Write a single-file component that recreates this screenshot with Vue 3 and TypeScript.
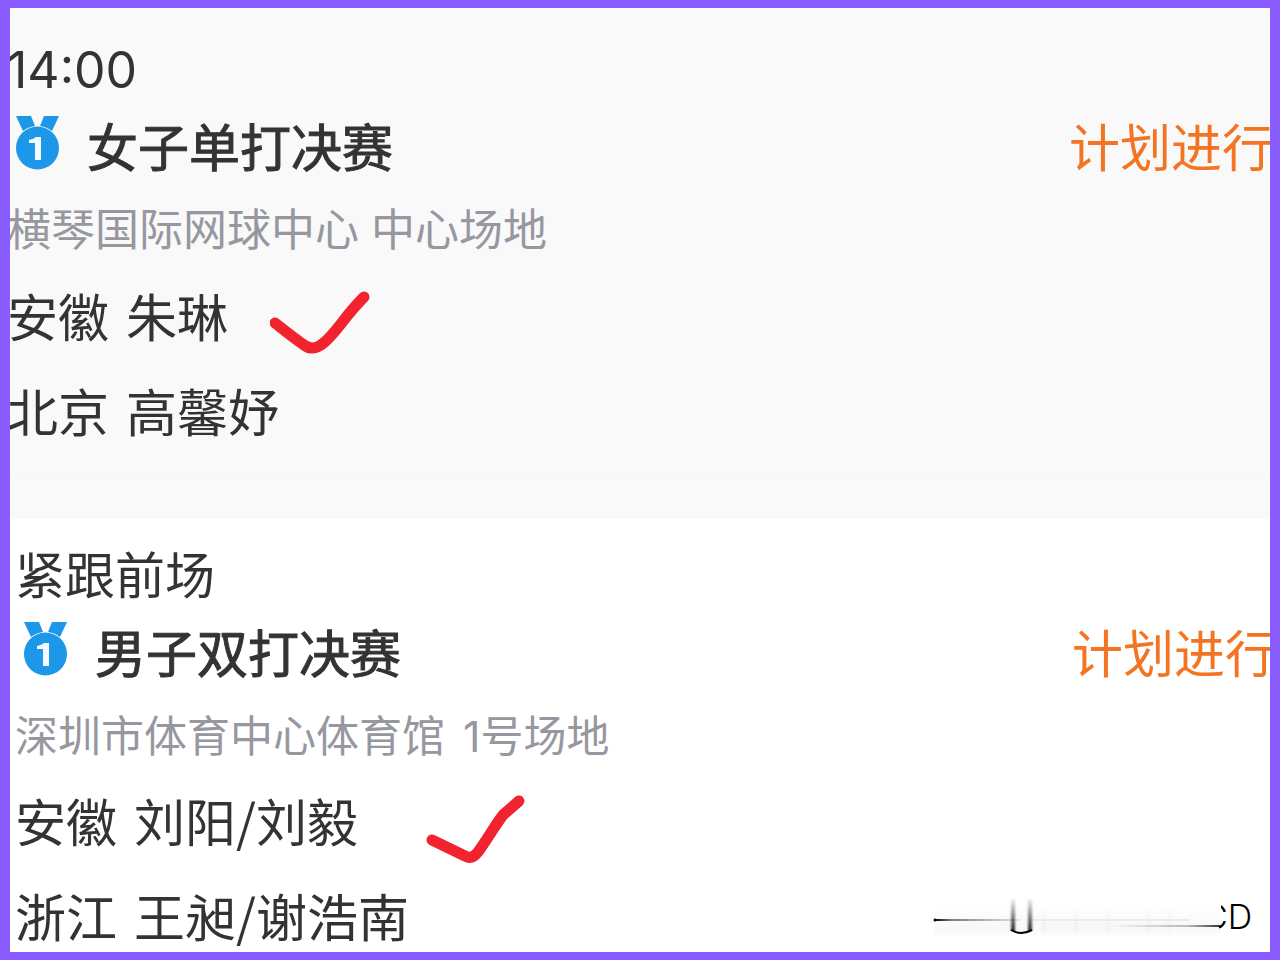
<script setup lang="ts">
interface Tick {
  width: number
  height: number
  path: string
  kind: string
}

interface Player {
  region: string
  name: string
  tick?: Tick
}

interface Match {
  id: string
  time: string
  title: string
  venue: string
  court: string
  status: string
  players: Player[]
}

const matches: Match[] = [
  {
    id: 'first',
    time: '14:00',
    title: '女子单打决赛',
    venue: '横琴国际网球中心',
    court: '中心场地',
    status: '计划进行',
    players: [
      {
        region: '安徽',
        name: '朱琳',
        tick: {
          width: 102,
          height: 64,
          kind: 'wide',
          path: 'M5 32 C14 39 24 47 34 54 Q42 60 51 54 C66 43 72 28 94 6',
        },
      },
      { region: '北京', name: '高馨妤' },
    ],
  },
  {
    id: 'second',
    time: '紧跟前场',
    title: '男子双打决赛',
    venue: '深圳市体育中心体育馆',
    court: '1号场地',
    status: '计划进行',
    players: [
      {
        region: '安徽',
        name: '刘阳/刘毅',
        tick: {
          width: 100,
          height: 70,
          kind: 'tall',
          path: 'M6 45 L39 61 Q46 65 52 57 C62 43 70 29 77 20 L93 6',
        },
      },
      { region: '浙江', name: '王昶/谢浩南' },
    ],
  },
]
</script>

<template>
  <main class="frame">
    <section v-for="match in matches" :key="match.id" class="match" :class="match.id">
      <p class="time">{{ match.time }}</p>
      <div class="heading">
        <svg class="medal" viewBox="0 0 46 56" aria-hidden="true">
          <path d="M1 1 H16 L20 11 Q13 12 8 16 Z M29 1 H44 L37 16 Q32 12 25 11 Z" />
          <circle cx="22.500" cy="33" r="21.500" />
          <path class="one" d="M14 25 Q19 24 21 22 H26 V45 H20 V28 H14 Z" />
        </svg>
        <h2>{{ match.title }}</h2>
        <span class="status">{{ match.status }}</span>
      </div>
      <p class="venue">
        <span>{{ match.venue }}</span>
        <span>{{ match.court }}</span>
      </p>
      <ul>
        <li v-for="player in match.players" :key="player.name">
          <span>{{ player.region }}</span>
          <span>{{ player.name }}</span>
          <svg
            v-if="player.tick"
            class="tick"
            :class="player.tick.kind"
            :width="player.tick.width"
            :height="player.tick.height"
            :viewBox="`0 0 ${player.tick.width} ${player.tick.height}`"
            aria-hidden="true"
          >
            <path :d="player.tick.path" />
          </svg>
        </li>
      </ul>
    </section>

    <svg class="watermark" width="330" height="50" viewBox="0 0 330 50">
      <defs>
        <linearGradient id="fadeRight">
          <stop offset="0" stop-color="#000" />
          <stop offset="0.200" stop-color="#000" stop-opacity="0.500" />
          <stop offset="1" stop-color="#000" stop-opacity="0.080" />
        </linearGradient>
        <linearGradient id="fadeLeft">
          <stop offset="0" stop-color="#000" stop-opacity="0" />
          <stop offset="0.700" stop-color="#000" stop-opacity="0.250" />
          <stop offset="1" stop-color="#000" stop-opacity="0.800" />
        </linearGradient>
        <linearGradient id="fadeUp" x1="0" y1="0" x2="0" y2="1">
          <stop offset="0" stop-color="#000" stop-opacity="0" />
          <stop offset="1" stop-color="#000" stop-opacity="0.850" />
        </linearGradient>
        <linearGradient id="haze" x1="0" y1="0" x2="0" y2="1">
          <stop offset="0" stop-color="#000" stop-opacity="0" />
          <stop offset="0.700" stop-color="#000" stop-opacity="0.030" />
          <stop offset="1" stop-color="#000" stop-opacity="0" />
        </linearGradient>
        <filter id="soft" x="-1" y="-1" width="3" height="3">
          <feGaussianBlur stdDeviation="1 0" />
        </filter>
        <clipPath id="letterEdge">
          <path d="M291 4 H329 V40 H289 V22 H291 Z" />
        </clipPath>
      </defs>
      <rect x="5" y="4" width="285" height="36" fill="url(#haze)" />
      <g fill="url(#haze)" filter="url(#soft)">
        <rect x="112" y="4" width="3" height="34" />
        <rect x="144" y="4" width="3" height="34" />
        <rect x="176" y="4" width="3" height="34" />
        <rect x="217" y="4" width="3" height="34" />
        <rect x="238" y="4" width="3" height="34" />
      </g>
      <rect x="4" y="20" width="86" height="2" fill="url(#fadeRight)" />
      <circle cx="5" cy="21" r="1.500" />
      <rect x="100" y="20" width="160" height="2" fill="#000" fill-opacity="0.060" />
      <rect x="180" y="26" width="111" height="2" fill="url(#fadeLeft)" />
      <g fill="url(#fadeUp)" filter="url(#soft)">
        <rect x="81" y="-2" width="4" height="34" />
        <rect x="98" y="-2" width="4" height="34" />
      </g>
      <path d="M81 31 Q91 37 102 31" fill="none" stroke="#000" stroke-width="2" />
      <text x="273" y="30" clip-path="url(#letterEdge)">CD</text>
    </svg>
  </main>
</template>

<style>
body {
  margin: 0;
}
</style>

<style scoped>
.frame {
  position: relative;
  box-sizing: border-box;
  min-height: 100vh;
  overflow: hidden;
  border: solid #895cff;
  border-width: 8px 10px;
  background: #fff;
  color: #333;
  font-family: Inter, 'Noto Sans CJK SC', sans-serif;
  font-size: 51px;
  white-space: nowrap;
}

p,
h2,
ul {
  margin: 0;
  padding: 0;
  font-weight: 400;
  font-size: inherit;
}

.match {
  padding: 23px 0 0 5px;
}

.first {
  padding: 28px 0 72px;
  background: linear-gradient(#f4f4f4, #f4f4f4) 0 470px / 100% 1px no-repeat #f9f9f9;
}

.first > * {
  margin-left: -3px;
}

.time {
  height: 68px;
  font-size: 50px;
  line-height: 68px;
}

.heading {
  display: flex;
  align-items: center;
  height: 90px;
  line-height: 90px;
}

.medal {
  flex: none;
  width: 46px;
  height: 56px;
  margin: 0 26px 12px 8px;
  fill: #1d98e9;
}

.medal .one {
  fill: #f4faff;
}

h2 {
  -webkit-text-stroke: 1px #333;
}

.status {
  flex: none;
  width: 201px;
  margin-left: auto;
  color: #f37423;
}

.second .status {
  width: 198px;
}

.venue {
  display: flex;
  gap: 12px;
  height: 72px;
  color: #96979f;
  font-size: 44px;
  line-height: 72px;
}

.second .venue {
  gap: 18px;
  font-size: 43px;
}

ul {
  display: flex;
  flex-direction: column;
  gap: 22px;
  padding-top: 13px;
}

.second ul {
  padding-top: 12px;
}

li {
  display: flex;
  gap: 17px;
  height: 73px;
  line-height: 73px;
  font-family: 'Noto Sans CJK SC', sans-serif;
}

.tick {
  flex: none;
  fill: none;
  stroke: #f1232e;
  stroke-width: 11;
  stroke-linecap: round;
  stroke-linejoin: round;
}

.wide {
  margin: 12px 0 0 25px;
}

.tall {
  margin: 11px 0 0 51px;
}

.watermark {
  position: absolute;
  right: 10px;
  bottom: 3px;
  font-family: Inter, sans-serif;
  font-size: 34px;
  font-weight: 300;
}
</style>
